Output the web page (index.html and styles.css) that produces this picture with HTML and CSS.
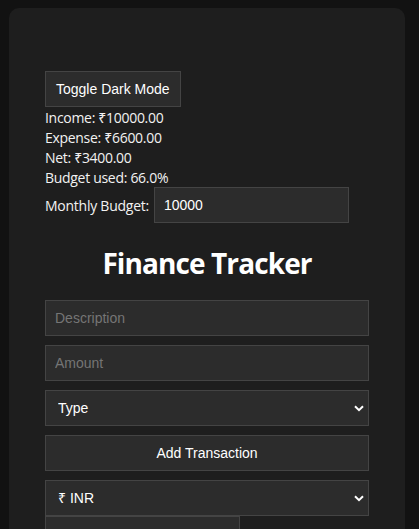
FILE: index.html
```html
<!DOCTYPE html>
<html lang="en">
<head>
<meta charset="utf-8">
<title>Finance Tracker</title>
<link rel="stylesheet" href="styles.css">
</head>
<body>
<div class="card">
  <div class="container">
    <button class="btn toggle">Toggle Dark Mode</button>
    <div class="summary">
      <div>Income: ₹10000.00</div>
      <div>Expense: ₹6600.00</div>
      <div>Net: ₹3400.00</div>
      <div>Budget used: 66.0%</div>
    </div>
    <div class="budget-row">
      <label class="budget-label">Monthly Budget:</label>
      <input class="field budget-input" type="text" value="10000">
    </div>
    <h2 class="title">Finance Tracker</h2>
    <div class="form">
      <input class="field" type="text" placeholder="Description">
      <input class="field" type="text" placeholder="Amount">
      <select class="field select">
        <option>Type</option>
      </select>
      <button class="btn add">Add Transaction</button>
      <select class="field select">
        <option>₹ INR</option>
      </select>
      <div class="field date-box"></div>
    </div>
  </div>
</div>
</body>
</html>
```
FILE: styles.css
```css
html, body {
  background: #121212;
}
body {
  margin: 8px 8px 0 9px;
  font-family: "Open Sans", "Noto Sans", sans-serif;
  color: #f2f2f2;
  font-size: 14px;
}
.card {
  width: 396px;
  min-height: 700px;
  background: #1e1e1e;
  border-radius: 10px;
  padding: 63px 36px 0;
  box-sizing: border-box;
}
.container {
  display: flex;
  flex-direction: column;
  align-items: flex-start;
}
.btn {
  font-family: "Liberation Sans", Arial, sans-serif;
  font-size: 14px;
  color: #fff;
  background: #2c2c2c;
  border: 1px solid #444;
  height: 36px;
  padding: 0 8px;
  box-sizing: border-box;
  margin: 0;
}
.toggle {
  padding: 0 10px;
}
.summary {
  line-height: 20px;
  letter-spacing: -0.3px;
  margin-top: 1px;
  margin-bottom: -1px;
}
.budget-row {
  display: flex;
  align-items: center;
  gap: 5px;
}
.budget-label {
  letter-spacing: -0.25px;
}
.field {
  font-family: "Liberation Sans", Arial, sans-serif;
  font-size: 14px;
  color: #fff;
  background: #2c2c2c;
  border: 1px solid #444;
  height: 36px;
  padding: 0 9px;
  box-sizing: border-box;
  margin: 0;
  border-radius: 0;
  outline: none;
}
.field::placeholder {
  color: #757575;
}
.budget-input {
  width: 195px;
}
.title {
  align-self: stretch;
  text-align: center;
  font-size: 28px;
  font-weight: 700;
  letter-spacing: -0.9px;
  margin: 22px 0 0;
  line-height: 36px;
  height: 55px;
  color: #fff;
}
.form {
  align-self: stretch;
  display: flex;
  flex-direction: column;
  gap: 9px;
}
.form .field, .form .btn {
  width: 100%;
}
.select {
  appearance: none;
  -webkit-appearance: none;
  padding-left: 12px;
  background-image: url("data:image/svg+xml,%3Csvg xmlns='http://www.w3.org/2000/svg' width='10' height='7' viewBox='0 0 10 7'%3E%3Cpath d='M1 1.2 L5 5.2 L9 1.2' fill='none' stroke='%23fff' stroke-width='2'/%3E%3C/svg%3E");
  background-repeat: no-repeat;
  background-position: right 4px center;
}
.date-box {
  width: 195px !important;
  margin-top: -9px;
}
```
